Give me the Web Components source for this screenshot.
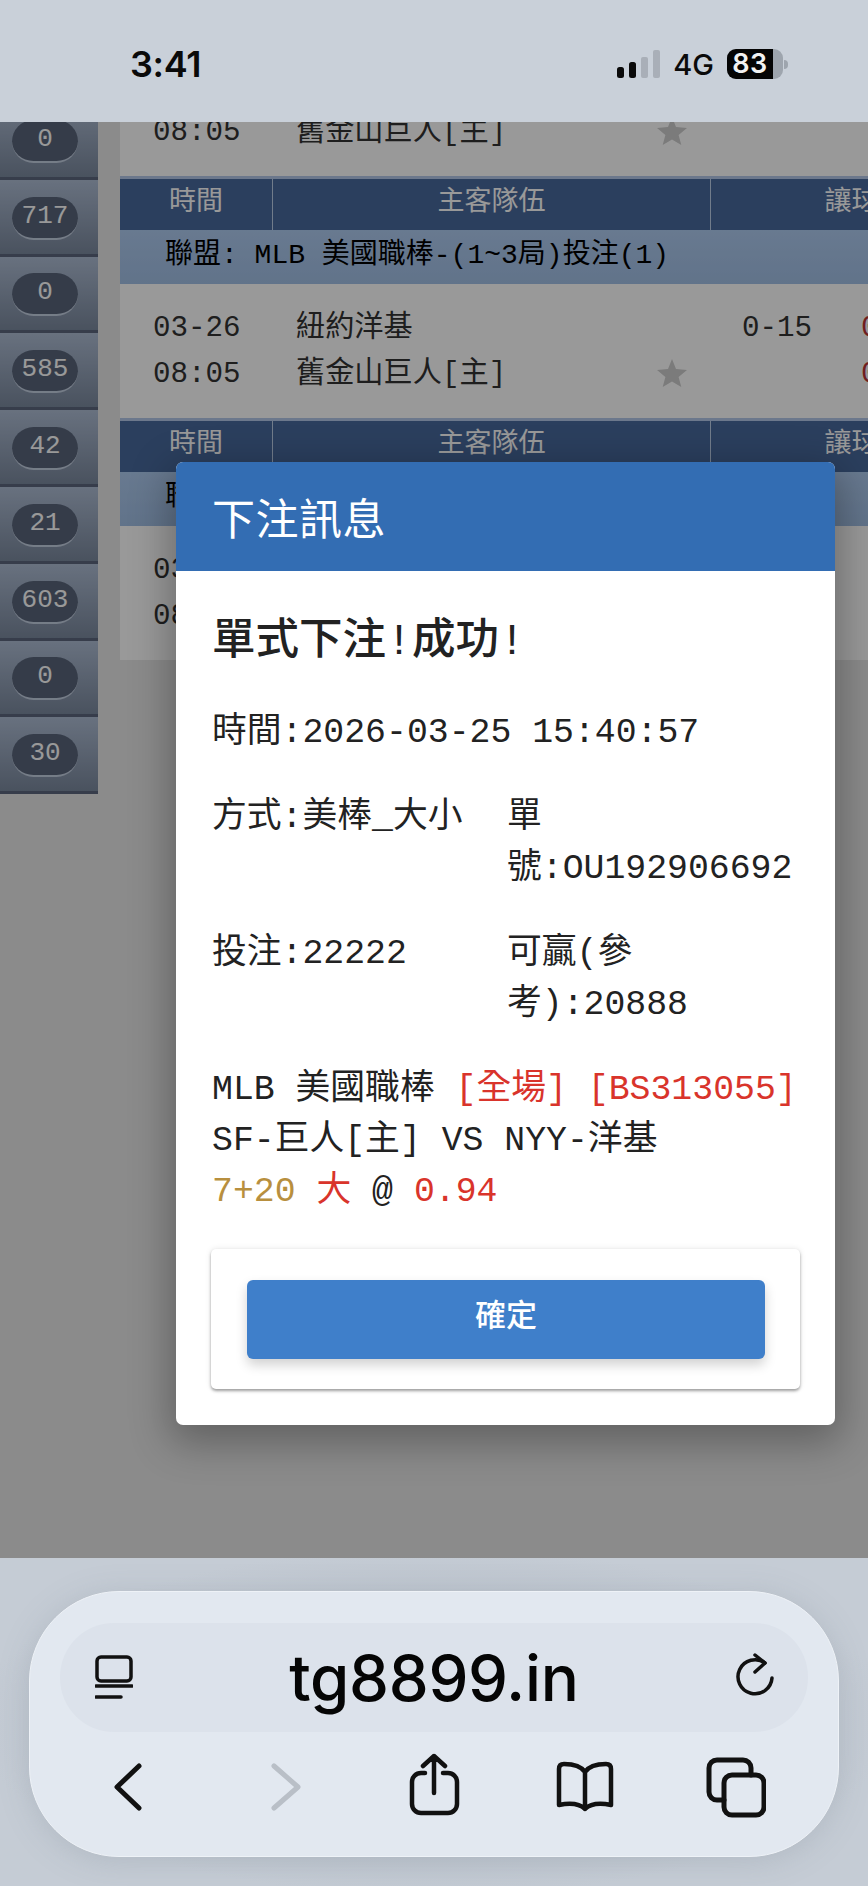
<!DOCTYPE html>
<html lang="zh-Hant">
<head>
<meta charset="utf-8">
<title>下注訊息</title>
<style>
  html, body { margin: 0; background: #e8e8e8; }
  body { width: 868px; height: 1886px; overflow: hidden; font-family: "Liberation Mono", "Noto Sans CJK TC", monospace; }
</style>
</head>
<body>
<phone-shell>
  <status-bar slot="top" time="3:41" network="4G" battery="83"></status-bar>

  <side-nav slot="side">
    <side-cell>0</side-cell>
    <side-cell>717</side-cell>
    <side-cell>0</side-cell>
    <side-cell>585</side-cell>
    <side-cell>42</side-cell>
    <side-cell>21</side-cell>
    <side-cell>603</side-cell>
    <side-cell>0</side-cell>
    <side-cell>30</side-cell>
  </side-nav>

  <odds-block slot="main" no-head></odds-block>
  <odds-block slot="main" league="聯盟: MLB 美國職棒-(1~3局)投注(1)" handicap="0-15" odds="0.94"></odds-block>
  <odds-block slot="main" league="聯盟: MLB 美國職棒-(1~3局)投注(1)"></odds-block>

  <bet-dialog slot="dialog" heading="下注訊息" action="確定">
    <h2 slot="result">單式下注!成功!</h2>
    <span slot="time">時間:2026-03-25 15:40:57</span>
    <span slot="a">方式:美棒_大小</span>
    <span slot="b">單號:OU192906692</span>
    <span slot="c">投注:22222</span>
    <span slot="d">可贏(參考):20888</span>
    <span slot="detail">MLB 美國職棒 <i class="red">[全場] [BS313055]</i><br>SF-巨人[主] VS NYY-洋基<br><i class="gold">7+20</i> <i class="red">大</i> @ <i class="red">0.94</i></span>
  </bet-dialog>

  <browser-bar slot="bottom" url="tg8899.in"></browser-bar>
</phone-shell>

<script>
const MONO = `"Liberation Mono", "Noto Sans CJK TC", monospace`;

class PhoneShell extends HTMLElement {
  constructor() {
    super();
    this.attachShadow({ mode: "open" }).innerHTML = `
      <style>
        :host { display: grid; grid-template-rows: 122px 1436px 328px; width: 868px; height: 1886px; overflow: hidden; }
        .view { position: relative; overflow: hidden; background: #e8e8e8; }
        .page { display: flex; align-items: flex-start; margin-top: -22px; gap: 22px; }
        .tables { flex: 1; min-width: 0; display: flex; flex-direction: column; margin-top: -58px; overflow: hidden; }
        .scrim { position: absolute; inset: 0; background: rgba(0,0,0,.4); }
        .top { position: relative; z-index: 3; }
      </style>
      <div class="top"><slot name="top"></slot></div>
      <div class="view">
        <div class="page">
          <slot name="side"></slot>
          <div class="tables"><slot name="main"></slot></div>
        </div>
        <div class="scrim"></div>
        <slot name="dialog"></slot>
      </div>
      <slot name="bottom"></slot>`;
  }
}

class StatusBar extends HTMLElement {
  constructor() {
    super();
    this.attachShadow({ mode: "open" }).innerHTML = `
      <style>
        :host { display: flex; align-items: center; justify-content: space-between; height: 122px; box-sizing: border-box; padding: 6px 85px 0 130px; background: #c9d0d9; color: #0a0a0a; font-family: Inter, sans-serif; }
        .time { font-size: 36px; font-weight: 600; letter-spacing: -.3px; }
        .right { display: flex; align-items: center; }
        svg { display: block; }
        .net { font-size: 29px; font-weight: 500; margin: 0 13px 0 12px; }
        .batt { position: relative; width: 56px; height: 30px; border-radius: 9px; background: #9ea5ae; overflow: visible; }
        .fill { width: 46px; height: 30px; border-radius: 9px 0 0 9px; background: #050505; color: #f2f2f2; font-size: 27px; font-weight: 600; line-height: 30px; text-align: center; letter-spacing: .5px; }
        .batt::after { content: ""; position: absolute; left: 57px; top: 11px; width: 4px; height: 9px; border-radius: 0 4px 4px 0; background: #9ea5ae; }
      </style>
      <span class="time"></span>
      <div class="right">
        <svg width="44" height="28" viewBox="0 0 44 28">
          <rect x="0" y="17" width="7" height="11" rx="2.5" fill="#0a0a0a"/>
          <rect x="12" y="12" width="7" height="16" rx="2.5" fill="#0a0a0a"/>
          <rect x="24" y="7" width="7" height="21" rx="2" fill="#a9afb8"/>
          <rect x="36" y="0" width="7" height="28" rx="2" fill="#a9afb8"/>
        </svg>
        <span class="net"></span>
        <div class="batt"><div class="fill"></div></div>
      </div>`;
  }
  connectedCallback() {
    const r = this.shadowRoot;
    r.querySelector(".time").textContent = this.getAttribute("time");
    r.querySelector(".net").textContent = this.getAttribute("network");
    r.querySelector(".fill").textContent = this.getAttribute("battery");
  }
}

class SideNav extends HTMLElement {
  constructor() {
    super();
    this.attachShadow({ mode: "open" }).innerHTML = `
      <style>:host { display: flex; flex-direction: column; flex: none; width: 98px; padding-top: 3px; }</style>
      <slot></slot>`;
  }
}

class SideCell extends HTMLElement {
  constructor() {
    super();
    this.attachShadow({ mode: "open" }).innerHTML = `
      <style>
        :host { display: flex; align-items: center; box-sizing: border-box; height: 76.8px; padding: 3px 0 0 12px; background: linear-gradient(#aebdd4, #7b899e); border-bottom: 3px solid #5d677d; }
        .pill { box-sizing: border-box; width: 66px; height: 43px; border-radius: 22px; background: #59657a; border-bottom: 2px solid #c4d0e2; color: #fff; font: 26px/39px ${MONO}; text-align: center; }
      </style>
      <div class="pill"><slot></slot></div>`;
  }
}

class OddsBlock extends HTMLElement {
  constructor() {
    super();
    this.attachShadow({ mode: "open" }).innerHTML = `
      <style>
        :host { display: block; font-family: ${MONO}; color: #333; }
        .head { display: grid; grid-template-columns: 152px 438px 282px; height: 51px; border-top: 3px solid #b4c9ea; background: #49699d; color: #fff; font-size: 27px; line-height: 48px; text-align: center; overflow: hidden; }
        .head span + span { border-left: 1px solid #bccfe8; }
        .league { height: 54px; box-sizing: border-box; padding-left: 45px; background: linear-gradient(#aecbf0, #a2c0e6); color: #000; font-size: 28px; line-height: 52px; white-space: nowrap; }
        .row { display: grid; grid-template-columns: 152px 438px 151px 1fr; grid-auto-rows: 46px; height: 134px; box-sizing: border-box; padding-top: 21.500px; background: #fff; font-size: 29.200px; line-height: 46px; white-space: nowrap; overflow: hidden; }
        .row > * { display: block; }
        .t { padding-left: 33px; }
        .n { padding-left: 24px; display: flex; justify-content: space-between; padding-right: 23px; }
        .h { padding-left: 32px; }
        .o { color: #b33; }
        svg { display: block; margin-top: 7px; }
      </style>
      <div class="top">
        <div class="head"><span>時間</span><span>主客隊伍</span><span>讓球</span></div>
        <div class="league"></div>
      </div>
      <div class="row">
        <span class="t">03-26</span><span class="n">紐約洋基</span><span class="h"></span><span class="o"></span>
        <span class="t">08:05</span><span class="n">舊金山巨人[主]
          <svg width="30" height="28" viewBox="0 0 30 28"><path d="M15 0l4 10 11 1-8.400 7 2.700 10L15 22.500 5.700 28l2.700-10L0 11l11-1z" fill="#cdcdcd"/></svg>
        </span><span class="h"></span><span class="o"></span>
      </div>`;
  }
  connectedCallback() {
    const r = this.shadowRoot;
    if (this.hasAttribute("no-head")) r.querySelector(".top").remove();
    else r.querySelector(".league").textContent = this.getAttribute("league");
    r.querySelector(".h").textContent = this.getAttribute("handicap") ?? "";
    r.querySelectorAll(".o").forEach(el => { el.textContent = this.getAttribute("odds") ?? ""; });
  }
}

class BetDialog extends HTMLElement {
  constructor() {
    super();
    this.attachShadow({ mode: "open" }).innerHTML = `
      <style>
        :host { position: absolute; left: 176px; top: 340px; width: 659px; height: 963px; display: flex; flex-direction: column; border-radius: 7px; background: #fff; box-shadow: 0 12px 40px 6px rgba(0,0,0,.3); font-family: ${MONO}; color: #222; overflow: visible; }
        header { height: 110px; box-sizing: border-box; padding-left: 36px; border-radius: 7px 7px 0 0; background: #336db3; color: #fff; font: 43px/108px "Noto Sans CJK TC", sans-serif; letter-spacing: .5px; }
        .body { flex: 1; padding: 46px 35px 36px 36px; font-size: 34.800px; line-height: 51px; display: flex; flex-direction: column; }
        ::slotted(h2) { margin: 0 0 39px; font-size: 43.500px; font-weight: 500; line-height: 51px; }
        .pair { display: grid; grid-template-columns: 295px 293px; margin-bottom: 34px; }
        .time { margin-bottom: 34px; white-space: nowrap; }
        .detail { margin-bottom: 32px; white-space: nowrap; }
        .card { margin: 0 0 0 -1px; padding: 31px 35px 30px 36px; border-radius: 5px; background: #fff; box-shadow: 0 2px 3px rgba(0,0,0,.35), 0 0 6px rgba(0,0,0,.1); }
        button { display: block; width: 100%; height: 79px; border: 0; border-radius: 6px; background: #3f7fca; color: #fff; font: 500 31px "Noto Sans CJK TC", sans-serif; box-shadow: 0 6px 12px rgba(0,0,0,.18); padding: 0 0 15px; }
      </style>
      <header></header>
      <div class="body">
        <slot name="result"></slot>
        <div class="time"><slot name="time"></slot></div>
        <div class="pair"><div><slot name="a"></slot></div><div><slot name="b"></slot></div></div>
        <div class="pair"><div><slot name="c"></slot></div><div><slot name="d"></slot></div></div>
        <div class="detail"><slot name="detail"></slot></div>
        <div class="card"><button></button></div>
      </div>`;
  }
  connectedCallback() {
    const r = this.shadowRoot;
    r.querySelector("header").textContent = this.getAttribute("heading");
    r.querySelector("button").textContent = this.getAttribute("action");
    this.querySelectorAll("i").forEach(el => {
      el.style.fontStyle = "normal";
      el.style.color = el.className === "gold" ? "#b88f3e" : "#d9342b";
    });
  }
}

class BrowserBar extends HTMLElement {
  constructor() {
    super();
    this.attachShadow({ mode: "open" }).innerHTML = `
      <style>
        :host { display: block; height: 328px; box-sizing: border-box; padding: 33px 29px 29px; background: radial-gradient(ellipse at 50% 50%, #a9b1bc 0%, #c5ccd5 75%); }
        .panel { height: 266px; box-sizing: border-box; padding: 31px 30px 0; border-radius: 90px; background: #e2e8f0; border: 1px solid #eef2f7; box-shadow: 0 4px 30px rgba(120,130,145,.25); }
        .url { display: flex; align-items: center; justify-content: space-between; height: 109px; box-sizing: border-box; padding: 0 31px 0 35px; border-radius: 54px; background: #dce2eb; }
        .url span { font: 500 63.500px Inter, sans-serif; color: #050505; letter-spacing: -.3px; }
        .tools { display: flex; margin: 18px 0 0 38px; }
        svg { display: block; fill: none; stroke: #111; stroke-linecap: round; stroke-linejoin: round; flex: none; }
        .tools svg { width: 60px; height: 70px; }
      </style>
      <div class="panel">
        <div class="url">
          <svg width="38" height="55" viewBox="0 0 38 55" stroke-width="3.500">
            <rect x="2" y="7" width="34" height="24" rx="4"/>
            <path d="M1 36h36M1 47h25"/>
          </svg>
          <span></span>
          <svg width="42" height="55" viewBox="0 0 42 55" stroke-width="3.500">
            <path d="M30 13A17 17 0 1 0 37 28"/>
            <path d="M20 5l10 8-10 9"/>
          </svg>
        </div>
        <div class="tools">
          <svg viewBox="0 0 60 70" stroke-width="5"><path d="M41 16L19 37l22 21"/></svg>
          <svg viewBox="0 0 60 70" stroke-width="5" style="margin-left:97px;stroke:#b9bfc7"><path d="M19 16l24 21-24 21"/></svg>
          <svg viewBox="0 0 60 70" stroke-width="4.500" style="margin-left:89px"><path d="M21 23h-4a9 9 0 0 0-9 9v22a9 9 0 0 0 9 9h27a9 9 0 0 0 9-9V32a9 9 0 0 0-9-9h-5M30 6v37M19 16L30 6l11 10"/></svg>
          <svg viewBox="0 0 60 70" stroke-width="4.500" style="margin-left:91px"><path d="M30 22c-4-6-12-8-21-8q-5 0-5 5v36c10-2 20-2 26 4 6-6 16-6 26-4V19q0-5-5-5c-9 0-17 2-21 8zM30 22v37"/></svg>
          <svg viewBox="0 0 60 70" stroke-width="5" style="margin-left:91px"><path d="M18 50h-7a8 8 0 0 1-8-8V18a8 8 0 0 1 8-8h26a8 8 0 0 1 8 8v7"/><rect x="18" y="25" width="40" height="40" rx="8"/></svg>
        </div>
      </div>`;
  }
  connectedCallback() {
    this.shadowRoot.querySelector(".url span").textContent = this.getAttribute("url");
  }
}

customElements.define("phone-shell", PhoneShell);
customElements.define("status-bar", StatusBar);
customElements.define("side-nav", SideNav);
customElements.define("side-cell", SideCell);
customElements.define("odds-block", OddsBlock);
customElements.define("bet-dialog", BetDialog);
customElements.define("browser-bar", BrowserBar);
</script>
</body>
</html>
